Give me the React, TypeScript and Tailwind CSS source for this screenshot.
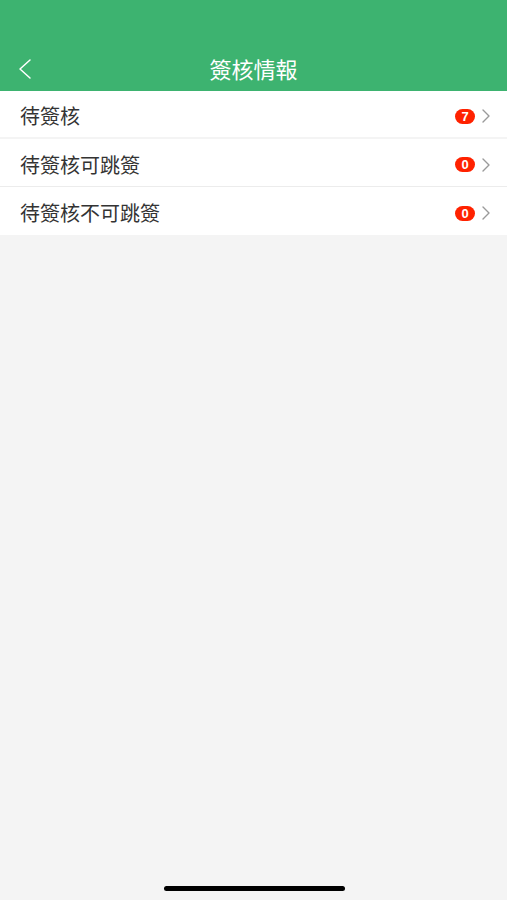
import React from "react";

const rows = [
  { label: "待簽核", count: 7 },
  { label: "待簽核可跳簽", count: 0 },
  { label: "待簽核不可跳簽", count: 0 },
];

export default function App() {
  return (
    <div
      className="w-[507px] h-[900px] bg-[#f4f4f4] flex flex-col relative overflow-hidden"
      style={{ fontFamily: '"Noto Sans CJK TC", "Noto Sans", sans-serif' }}
    >
      <div className="h-[91px] bg-[#3db370] flex items-end pb-[3px] relative">
        <div className="w-full h-[40px] flex items-center justify-center relative">
          <svg className="absolute left-[17px] top-[10px]" width="16" height="22" viewBox="0 0 16 22" fill="none">
            <path d="M13 2 L3 11 L13 20" stroke="#ffffff" strokeWidth="1.5" strokeLinecap="round" strokeLinejoin="round" />
          </svg>
          <span className="text-white text-[22px] leading-none">簽核情報</span>
        </div>
      </div>
      <div className="flex flex-col bg-white">
        {rows.map((r, i) => (
          <div
            key={r.label}
            className={
              i === 0
                ? "h-[48px] flex items-center pt-[4px] pl-[20px] pr-[16px] border-b-2 border-[#f4f4f4]"
                : i === 1
                ? "h-[48px] flex items-center pt-[4px] pl-[20px] pr-[16px] border-b border-[#ececec]"
                : "h-[48px] flex items-center pt-[4px] pl-[20px] pr-[16px]"
            }
          >
            <span className="flex-1 text-[20px] text-[#333333] leading-none">{r.label}</span>
            <span
              className="h-[15px] w-[20px] rounded-full bg-[#ff2200] text-white text-[13px] font-bold flex items-center justify-center leading-none"
              style={{ fontFamily: '"Liberation Sans", Arial, sans-serif' }}
            >
              {r.count}
            </span>
            <svg className="ml-[6px]" width="10" height="16" viewBox="0 0 10 16" fill="none">
              <path d="M2 2 L8 8 L2 14" stroke="#9a9a9a" strokeWidth="1.4" strokeLinecap="round" strokeLinejoin="round" />
            </svg>
          </div>
        ))}
      </div>
      <div className="absolute left-[164px] top-[886px] w-[181px] h-[5px] rounded-full bg-black" />
    </div>
  );
}
